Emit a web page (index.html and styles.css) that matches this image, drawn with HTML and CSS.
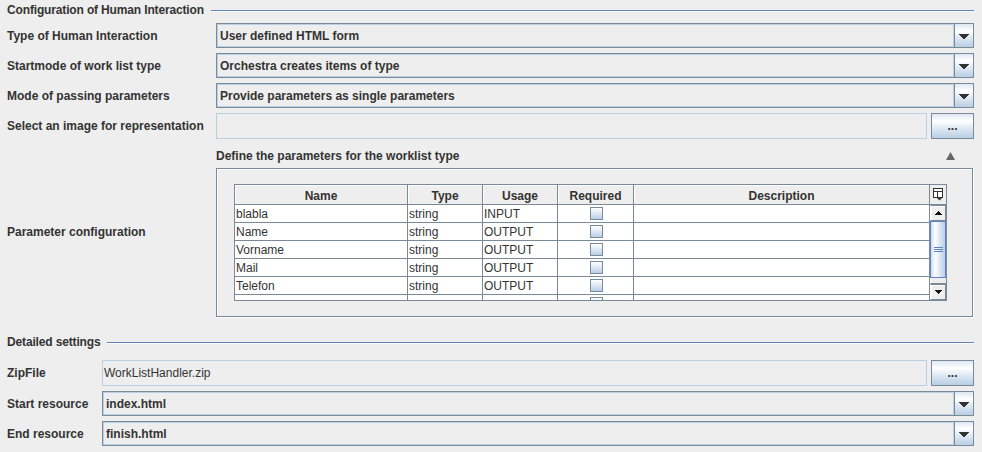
FILE: index.html
```html
<!DOCTYPE html>
<html>
<head>
<meta charset="utf-8">
<link rel="stylesheet" href="styles.css">
</head>
<body>
<div class="page">
  <div class="titled t1"><span class="ttl">Configuration of Human Interaction</span><span class="rule"></span></div>

  <div class="frow r-first">
    <div class="lbl w1">Type of Human Interaction</div>
    <div class="combo"><div class="cv">User defined HTML form</div><div class="cbtn"><svg width="10" height="5" viewBox="0 0 10 5" shape-rendering="crispEdges"><path d="M0 0h10v1H0zM1 1h8v1H1zM2 2h6v1H2zM3 3h4v1H3zM4 4h2v1H4z" fill="#333"/></svg></div></div>
  </div>
  <div class="frow">
    <div class="lbl w1">Startmode of work list type</div>
    <div class="combo"><div class="cv">Orchestra creates items of type</div><div class="cbtn"><svg width="10" height="5" viewBox="0 0 10 5" shape-rendering="crispEdges"><path d="M0 0h10v1H0zM1 1h8v1H1zM2 2h6v1H2zM3 3h4v1H3zM4 4h2v1H4z" fill="#333"/></svg></div></div>
  </div>
  <div class="frow">
    <div class="lbl w1">Mode of passing parameters</div>
    <div class="combo"><div class="cv">Provide parameters as single parameters</div><div class="cbtn"><svg width="10" height="5" viewBox="0 0 10 5" shape-rendering="crispEdges"><path d="M0 0h10v1H0zM1 1h8v1H1zM2 2h6v1H2zM3 3h4v1H3zM4 4h2v1H4z" fill="#333"/></svg></div></div>
  </div>
  <div class="frow tall">
    <div class="lbl w1">Select an image for representation</div>
    <div class="tf"></div>
    <div class="dots">...</div>
  </div>

  <div class="prow">
    <div class="lbl w1 plbl">Parameter configuration</div>
    <div class="pright">
      <div class="phdr"><span class="ptitle">Define the parameters for the worklist type</span><svg class="coll" width="9" height="8" viewBox="0 0 9 8"><path d="M4.5 0L9 8H0z" fill="#666"/></svg></div>
      <div class="panel">
        <div class="tbl">
          <div class="thead">
            <div class="hc c1">Name</div>
            <div class="hc c2">Type</div>
            <div class="hc c3">Usage</div>
            <div class="hc c4">Required</div>
            <div class="hc c5">Description</div>
            <div class="corner"><svg width="11" height="13" viewBox="0 0 11 13"><rect x="0.5" y="0.5" width="9" height="9" fill="#fff" stroke="#333"/><path d="M0.5 3.5h9M4.5 3.5v6" stroke="#333" fill="none"/><path d="M3 9h7l-3.5 3.5z" fill="#333"/></svg></div>
          </div>
          <div class="tbody">
            <div class="rows">
              <div class="tr"><div class="td c1">blabla</div><div class="td c2">string</div><div class="td c3">INPUT</div><div class="td c4"><span class="chk"></span></div><div class="td c5"></div></div>
              <div class="tr"><div class="td c1">Name</div><div class="td c2">string</div><div class="td c3">OUTPUT</div><div class="td c4"><span class="chk"></span></div><div class="td c5"></div></div>
              <div class="tr"><div class="td c1">Vorname</div><div class="td c2">string</div><div class="td c3">OUTPUT</div><div class="td c4"><span class="chk"></span></div><div class="td c5"></div></div>
              <div class="tr"><div class="td c1">Mail</div><div class="td c2">string</div><div class="td c3">OUTPUT</div><div class="td c4"><span class="chk"></span></div><div class="td c5"></div></div>
              <div class="tr"><div class="td c1">Telefon</div><div class="td c2">string</div><div class="td c3">OUTPUT</div><div class="td c4"><span class="chk"></span></div><div class="td c5"></div></div>
              <div class="tr"><div class="td c1"></div><div class="td c2"></div><div class="td c3"></div><div class="td c4"><span class="chk"></span></div><div class="td c5"></div></div>
            </div>
            <div class="sbar">
              <div class="sbtn"><svg width="7" height="4" viewBox="0 0 7 4" shape-rendering="crispEdges"><path d="M3 0h1v1H3zM2 1h3v1H2zM1 2h5v1H1zM0 3h7v1H0z" fill="#111"/></svg></div>
              <div class="thumb"><svg width="9" height="5" viewBox="0 0 9 5" shape-rendering="crispEdges"><path d="M0 0h9v1H0zM0 2h9v1H0zM0 4h9v1H0z" fill="#6382bf"/></svg></div>
              <div class="track"></div>
              <div class="sbtn"><svg width="7" height="4" viewBox="0 0 7 4" shape-rendering="crispEdges"><path d="M0 0h7v1H0zM1 1h5v1H1zM2 2h3v1H2zM3 3h1v1H3z" fill="#111"/></svg></div>
            </div>
          </div>
        </div>
      </div>
    </div>
  </div>

  <div class="titled t2"><span class="ttl">Detailed settings</span><span class="rule"></span></div>

  <div class="frow tall r-zip">
    <div class="lbl w2">ZipFile</div>
    <div class="tf">WorkListHandler.zip</div>
    <div class="dots">...</div>
  </div>
  <div class="frow">
    <div class="lbl w2">Start resource</div>
    <div class="combo"><div class="cv">index.html</div><div class="cbtn"><svg width="10" height="5" viewBox="0 0 10 5" shape-rendering="crispEdges"><path d="M0 0h10v1H0zM1 1h8v1H1zM2 2h6v1H2zM3 3h4v1H3zM4 4h2v1H4z" fill="#333"/></svg></div></div>
  </div>
  <div class="frow">
    <div class="lbl w2">End resource</div>
    <div class="combo"><div class="cv">finish.html</div><div class="cbtn"><svg width="10" height="5" viewBox="0 0 10 5" shape-rendering="crispEdges"><path d="M0 0h10v1H0zM1 1h8v1H1zM2 2h6v1H2zM3 3h4v1H3zM4 4h2v1H4z" fill="#333"/></svg></div></div>
  </div>
</div>
</body>
</html>
```

FILE: styles.css
```css
* { box-sizing: border-box; margin: 0; padding: 0; }
html, body { background: #eeeeee; }
body {
  font-family: "Liberation Sans", Arial, sans-serif;
  font-size: 12px;
  color: #333333;
  width: 982px;
  height: 452px;
  overflow: hidden;
}
.page {
  display: flex;
  flex-direction: column;
  padding: 0 8px 0 7px;
}
.titled {
  display: flex;
  height: 20px;
  align-items: center;
  font-weight: bold;
}
.ttl { letter-spacing: -0.15px; white-space: nowrap; }
.rule {
  flex: 1;
  align-self: flex-start;
  margin-top: 10px;
  margin-left: 7px;
  height: 2px;
  border-top: 1px solid #6382bf;
  border-bottom: 1px solid #ffffff;
}
.t2 { margin-top: 15px; }

.frow {
  display: flex;
  align-items: center;
  height: 25px;
  margin-top: 5px;
}
.frow.r-first { margin-top: 3px; }
.frow.tall { height: 26px; }
.frow.r-zip { margin-top: 8px; }

.lbl { font-weight: bold; white-space: nowrap; }
.w1 { width: 209px; flex: none; }
.w2 { width: 95px; flex: none; }
.plbl { margin-top: 8px; }

.combo {
  flex: 1;
  height: 25px;
  display: flex;
  border: 1px solid #7a8a99;
}
.cv {
  flex: 1;
  border: 1px solid #b8cfe5;
  padding-left: 2px;
  font-weight: bold;
  display: flex;
  align-items: center;
  white-space: nowrap;
}
.cbtn {
  width: 19px;
  flex: none;
  border-left: 1px solid #7a8a99;
  background: linear-gradient(#dde8f3 0%, #ffffff 30%, #dde8f3 60%, #b8cfe5 100%);
  display: flex;
  align-items: center;
  justify-content: center;
  padding-top: 1px;
}
.tf {
  flex: 1;
  height: 26px;
  border: 1px solid #b8cfe5;
  padding-left: 1px;
  display: flex;
  align-items: center;
  white-space: nowrap;
}
.dots {
  width: 43px;
  flex: none;
  height: 26px;
  margin-left: 4px;
  border: 1px solid #7a8a99;
  background: linear-gradient(#dde8f3 0%, #ffffff 30%, #dde8f3 60%, #b8cfe5 100%);
  font-weight: bold;
  display: flex;
  align-items: center;
  justify-content: center;
  padding-bottom: 1px;
}

.prow {
  display: flex;
  align-items: center;
}
.pright {
  flex: 1;
  display: flex;
  flex-direction: column;
}
.phdr {
  margin-top: 9px;
  height: 15px;
  margin-bottom: 5px;
  display: flex;
  align-items: center;
  font-weight: bold;
  padding-right: 19px;
}
.ptitle { flex: 1; }
.coll { flex: none; }
.panel {
  width: 757px;
  border: 1px solid #7a8a99;
  box-shadow: inset 1px 1px 0 #ffffff, 1px 1px 0 #ffffff;
  padding: 15px 25px 15px 17px;
}
.tbl {
  width: 713px;
  height: 117px;
  border: 1px solid #7a8a99;
  display: flex;
  flex-direction: column;
  background: #ffffff;
}
.thead {
  display: flex;
  height: 20px;
  flex: none;
  border-bottom: 1px solid #7a8a99;
  background: #eeeeee;
}
.hc {
  border-right: 1px solid #7a8a99;
  font-weight: bold;
  display: flex;
  align-items: center;
  justify-content: center;
  box-shadow: inset 1px 1px 0 #ffffff;
  padding-top: 2px;
}
.c1 { width: 173px; }
.c2 { width: 75px; }
.c3 { width: 75px; }
.c4 { width: 76px; }
.c5 { width: 296px; }
.corner {
  width: 16px;
  display: flex;
  align-items: center;
  justify-content: center;
  background: #eeeeee;
}
.tbody {
  height: 95px;
  display: flex;
  overflow: hidden;
}
.rows {
  width: 695px;
  display: flex;
  flex-direction: column;
  overflow: hidden;
}
.tr {
  display: flex;
  height: 18px;
  flex: none;
  border-bottom: 1px solid #7a8a99;
}
.td {
  border-right: 1px solid #7a8a99;
  padding-left: 1px;
  display: flex;
  align-items: center;
  white-space: nowrap;
}
.td.c4 { justify-content: center; }
.chk {
  width: 13px;
  height: 13px;
  border: 1px solid #7a8a99;
  background: linear-gradient(#ffffff 0%, #dde8f3 50%, #b8cfe5 100%);
}
.sbar {
  width: 16px;
  display: flex;
  flex-direction: column;
  background: #eeeeee;
}
.sbtn {
  height: 16px;
  flex: none;
  border: 1px solid #7a8a99;
  border-left-color: #ffffff;
  background: #eeeeee;
  box-shadow: inset 1px 1px 0 #ffffff;
  display: flex;
  align-items: center;
  justify-content: center;
}
.thumb {
  height: 57px;
  flex: none;
  border: 1px solid #6382bf;
  background: linear-gradient(to right, #c8ddf2 0%, #ffffff 30%, #dde8f3 60%, #b8cfe5 100%);
  display: flex;
  align-items: center;
  justify-content: center;
}
.track {
  flex: 1;
  border-left: 1px solid #ffffff;
  border-bottom: 1px solid #7a8a99;
  background: #eeeeee;
}
```
